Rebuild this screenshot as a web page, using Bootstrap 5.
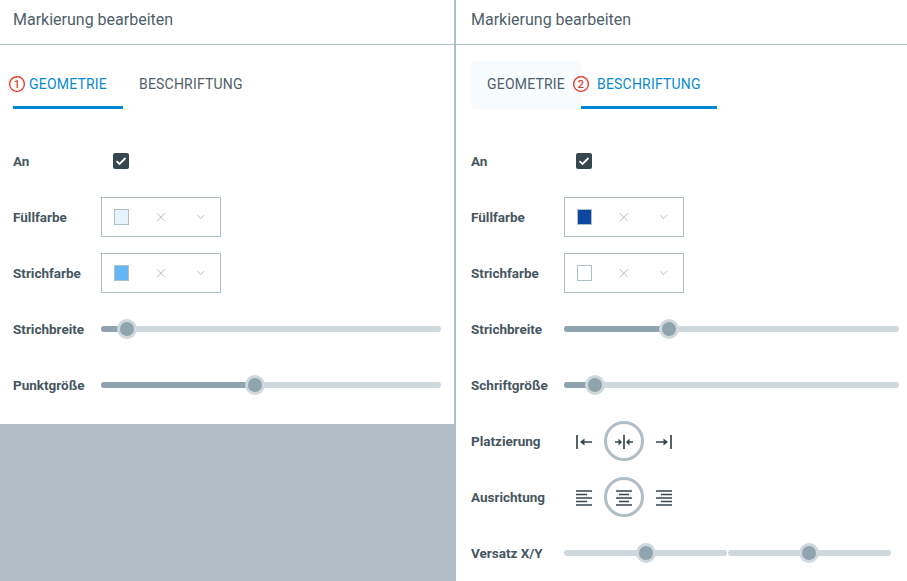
<!DOCTYPE html>
<html lang="de">
<head>
    <meta charset="UTF-8">
    <meta name="viewport" content="width=device-width, initial-scale=1.0">
    <title>Markierung bearbeiten</title>
    <link href="https://cdn.jsdelivr.net/npm/bootstrap@5.3.0/dist/css/bootstrap.min.css" rel="stylesheet">
    <style>
        html, body {
            height: 581px;
            overflow: hidden;
        }
        body {
            font-family: Roboto, "Liberation Sans", sans-serif;
            color: #3d4d58;
            background: #fff;
        }
        .panes {
            height: 581px;
        }
        .pane-left {
            width: 454px;
            background: #b0bec5;
        }
        .pane-split {
            width: 2px;
            background: #b0bec5;
        }
        .pane-right {
            width: 451px;
            background: #fff;
        }
        .pane-body {
            background: #fff;
            height: 424px;
        }
        .pane-head {
            height: 45px;
            padding: 11px 0 0 13px;
            font-size: 16px;
            line-height: 18px;
            color: #4f5f6a;
            border-bottom: 1px solid #b0bec5;
        }
        .pane-right .pane-head {
            padding-left: 15px;
        }
        .tab-strip {
            padding: 16px 0 0 13px;
            height: 88px;
        }
        .pane-right .tab-strip {
            padding-left: 15px;
        }
        .tab-item {
            position: relative;
            height: 48px;
            padding: 14px 16px 0;
            font-size: 14px;
            letter-spacing: .2px;
            line-height: 18px;
            text-transform: uppercase;
            color: #4f5f6a;
        }
        .tab-item.is-on {
            color: #0a8bd0;
            border-bottom: 3px solid #0288d1;
        }
        .tab-item.is-soft {
            background: #f8fcff;
        }
        .tab-mark {
            position: absolute;
            top: 14px;
            width: 18px;
            height: 18px;
        }
        .fields-left {
            padding: 0 13px;
        }
        .fields-right {
            padding: 0 8px 0 15px;
        }
        .field-row {
            height: 56px;
        }
        .field-name {
            font-size: 13.5px;
            font-weight: 700;
            color: #46565f;
            flex: none;
        }
        .pane-left .field-name {
            width: 88px;
        }
        .pane-right .field-name {
            width: 93px;
        }
        .check-box {
            width: 16px;
            height: 16px;
            margin-left: 12px;
            border-radius: 2px;
            background: #37474f;
        }
        .swatch-box {
            width: 120px;
            height: 40px;
            padding: 0 12px;
            gap: 24px;
            border: 1px solid #b0bec5;
        }
        .swatch-chip {
            width: 16px;
            height: 16px;
            border: 1px solid #b0bec5;
        }
        .slide-track {
            position: relative;
            height: 6px;
            border-radius: 3px;
            background: #cfd8dc;
        }
        .slide-fill {
            height: 6px;
            border-radius: 3px;
            background: #90a4ae;
        }
        .slide-knob {
            position: absolute;
            top: -7px;
            width: 20px;
            height: 20px;
            margin-left: -10px;
            border-radius: 50%;
            background: #90a4ae;
            border: 3px solid #cfd8dc;
        }
        .offset-pair {
            gap: 1px;
            margin-right: 8px;
        }
        .tool-btn {
            width: 40px;
            height: 40px;
            border: 3px solid transparent;
            border-radius: 50%;
            background: none;
            padding: 0;
        }
        .tool-btn.is-on {
            border-color: #b0bec5;
        }
    </style>
</head>
<body>
    <svg class="d-none">
        <symbol id="ic-clear" viewBox="0 0 16 16"><path d="M4 4l8.500 8.500M12.500 4 4 12.500" fill="none" stroke="#b0bec5"/></symbol>
        <symbol id="ic-down" viewBox="0 0 16 16"><path d="M4.500 6 8 9.700 11.500 6" fill="none" stroke="#b0bec5"/></symbol>
        <symbol id="ic-check" viewBox="0 0 12 12"><path d="M1.500 6.200 4.500 9 10.500 3" fill="none" stroke="#fff" stroke-width="1.800"/></symbol>
        <symbol id="ic-place-l" viewBox="0 0 16 14"><path d="M1 0v14M5 7h11" fill="none" stroke="#37474f" stroke-width="1.700"/><path d="M8.500 3.500 4 7l4.500 3.500z" fill="#37474f"/></symbol>
        <symbol id="ic-place-c" viewBox="0 0 18 14"><path d="M9 0v14M0 7h5M13 7h5" fill="none" stroke="#37474f" stroke-width="1.700"/><path d="M3.500 3.500 7 7l-3.500 3.500zM14.500 3.500 11 7l3.500 3.500z" fill="#37474f"/></symbol>
        <symbol id="ic-place-r" viewBox="0 0 16 14"><path d="M15 0v14M0 7h11" fill="none" stroke="#37474f" stroke-width="1.700"/><path d="M7.500 3.500 12 7l-4.500 3.500z" fill="#37474f"/></symbol>
        <symbol id="ic-align-l" viewBox="0 0 16 16"><path d="M0 1h16M0 4.500h11M0 8h16M0 11.500h11M0 15h16" fill="none" stroke="#37474f" stroke-width="1.600"/></symbol>
        <symbol id="ic-align-c" viewBox="0 0 16 16"><path d="M0 1h16M3 4.500h10M0 8h16M3 11.500h10M0 15h16" fill="none" stroke="#37474f" stroke-width="1.600"/></symbol>
        <symbol id="ic-align-r" viewBox="0 0 16 16"><path d="M0 1h16M5 4.500h11M0 8h16M5 11.500h11M0 15h16" fill="none" stroke="#37474f" stroke-width="1.600"/></symbol>
    </svg>
    <div class="panes d-flex">
        <div class="pane-left">
            <div class="pane-body">
                <div class="pane-head">Markierung bearbeiten</div>
                <div class="tab-strip d-flex">
                    <div class="tab-item is-on">Geometrie
                        <svg class="tab-mark" style="left:-5px" viewBox="0 0 18 18" fill="none"><circle cx="9" cy="9" r="7.400" stroke="#e8432e" stroke-width="1.400"/><path d="M3 5.500C5 2 10 .8 13.500 2.800" stroke="#e8432e" stroke-width=".8"/><text x="9" y="13" text-anchor="middle" font-size="11" font-weight="500" font-family="Roboto" fill="#d8432e">1</text></svg>
                    </div>
                    <div class="tab-item">Beschriftung</div>
                </div>
                <div class="fields-left">
                    <div class="field-row d-flex align-items-center">
                        <div class="field-name">An</div>
                        <div class="check-box d-flex align-items-center justify-content-center">
                            <svg width="12" height="12"><use href="#ic-check"/></svg>
                        </div>
                    </div>
                    <div class="field-row d-flex align-items-center">
                        <div class="field-name">Füllfarbe</div>
                        <div class="swatch-box d-flex align-items-center">
                            <div class="swatch-chip" style="background:#e8f4fd"></div>
                            <svg width="16" height="16"><use href="#ic-clear"/></svg>
                            <svg width="16" height="16"><use href="#ic-down"/></svg>
                        </div>
                    </div>
                    <div class="field-row d-flex align-items-center">
                        <div class="field-name">Strichfarbe</div>
                        <div class="swatch-box d-flex align-items-center">
                            <div class="swatch-chip" style="background:#64b5f6"></div>
                            <svg width="16" height="16"><use href="#ic-clear"/></svg>
                            <svg width="16" height="16"><use href="#ic-down"/></svg>
                        </div>
                    </div>
                    <div class="field-row d-flex align-items-center">
                        <div class="field-name">Strichbreite</div>
                        <div class="slide-track flex-grow-1">
                            <div class="slide-fill" style="width:26px"></div>
                            <div class="slide-knob" style="left:26px"></div>
                        </div>
                    </div>
                    <div class="field-row d-flex align-items-center">
                        <div class="field-name">Punktgröße</div>
                        <div class="slide-track flex-grow-1">
                            <div class="slide-fill" style="width:154px"></div>
                            <div class="slide-knob" style="left:154px"></div>
                        </div>
                    </div>
                </div>
            </div>
        </div>
        <div class="pane-split"></div>
        <div class="pane-right">
            <div class="pane-head">Markierung bearbeiten</div>
            <div class="tab-strip d-flex">
                <div class="tab-item is-soft">Geometrie</div>
                <div class="tab-item is-on">Beschriftung
                    <svg class="tab-mark" style="left:-9px" viewBox="0 0 18 18" fill="none"><circle cx="9" cy="9" r="7.400" stroke="#e8432e" stroke-width="1.400"/><path d="M3 5.500C5 2 10 .8 13.500 2.800" stroke="#e8432e" stroke-width=".8"/><text x="9" y="13" text-anchor="middle" font-size="11" font-weight="500" font-family="Roboto" fill="#d8432e">2</text></svg>
                </div>
            </div>
            <div class="fields-right">
                <div class="field-row d-flex align-items-center">
                    <div class="field-name">An</div>
                    <div class="check-box d-flex align-items-center justify-content-center">
                        <svg width="12" height="12"><use href="#ic-check"/></svg>
                    </div>
                </div>
                <div class="field-row d-flex align-items-center">
                    <div class="field-name">Füllfarbe</div>
                    <div class="swatch-box d-flex align-items-center">
                        <div class="swatch-chip" style="background:#0d47a1"></div>
                        <svg width="16" height="16"><use href="#ic-clear"/></svg>
                        <svg width="16" height="16"><use href="#ic-down"/></svg>
                    </div>
                </div>
                <div class="field-row d-flex align-items-center">
                    <div class="field-name">Strichfarbe</div>
                    <div class="swatch-box d-flex align-items-center">
                        <div class="swatch-chip" style="background:#fff"></div>
                        <svg width="16" height="16"><use href="#ic-clear"/></svg>
                        <svg width="16" height="16"><use href="#ic-down"/></svg>
                    </div>
                </div>
                <div class="field-row d-flex align-items-center">
                    <div class="field-name">Strichbreite</div>
                    <div class="slide-track flex-grow-1">
                        <div class="slide-fill" style="width:105px"></div>
                        <div class="slide-knob" style="left:105px"></div>
                    </div>
                </div>
                <div class="field-row d-flex align-items-center">
                    <div class="field-name">Schriftgröße</div>
                    <div class="slide-track flex-grow-1">
                        <div class="slide-fill" style="width:31px"></div>
                        <div class="slide-knob" style="left:31px"></div>
                    </div>
                </div>
                <div class="field-row d-flex align-items-center">
                    <div class="field-name">Platzierung</div>
                    <div class="d-flex align-items-center">
                        <button class="tool-btn" type="button"><svg width="16" height="14"><use href="#ic-place-l"/></svg></button>
                        <button class="tool-btn is-on" type="button"><svg width="18" height="14"><use href="#ic-place-c"/></svg></button>
                        <button class="tool-btn" type="button"><svg width="16" height="14"><use href="#ic-place-r"/></svg></button>
                    </div>
                </div>
                <div class="field-row d-flex align-items-center">
                    <div class="field-name">Ausrichtung</div>
                    <div class="d-flex align-items-center">
                        <button class="tool-btn" type="button"><svg width="16" height="16"><use href="#ic-align-l"/></svg></button>
                        <button class="tool-btn is-on" type="button"><svg width="16" height="16"><use href="#ic-align-c"/></svg></button>
                        <button class="tool-btn" type="button"><svg width="16" height="16"><use href="#ic-align-r"/></svg></button>
                    </div>
                </div>
                <div class="field-row d-flex align-items-center">
                    <div class="field-name">Versatz X/Y</div>
                    <div class="offset-pair d-flex flex-grow-1">
                        <div class="slide-track flex-grow-1">
                            <div class="slide-knob" style="left:82px"></div>
                        </div>
                        <div class="slide-track flex-grow-1">
                            <div class="slide-knob" style="left:81px"></div>
                        </div>
                    </div>
                </div>
            </div>
        </div>
    </div>
    <script src="https://cdn.jsdelivr.net/npm/bootstrap@5.3.0/dist/js/bootstrap.bundle.min.js"></script>
</body>
</html>
